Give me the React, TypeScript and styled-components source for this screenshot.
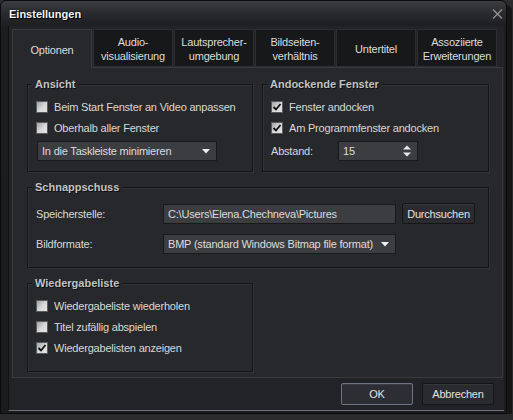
import React from "react";
import styled, { createGlobalStyle } from "styled-components";

const GlobalStyle = createGlobalStyle`
  html, body { margin: 0; padding: 0; background: #2b2b2d; }
  body {
    font-family: "Liberation Sans", Arial, sans-serif;
    font-size: 11px;
    letter-spacing: -0.2px;
    color: #d8d8d8;
  }
  * { box-sizing: border-box; }
`;

const Window = styled.div`
  width: 507px;
  height: 414px;
  display: flex;
  flex-direction: column;
  border: 1px solid #0b0b0c;
  border-radius: 6px 6px 0 0;
  background: linear-gradient(#3c3d40 0, #2a2b2e 12px, #1c1d1f 26px, #1b1c1e 100%);
  box-shadow: 5px 5px 0 #161617;
`;

const TitleBar = styled.div`
  height: 25px;
  flex: none;
  display: flex;
  align-items: center;
  justify-content: space-between;
  padding: 0 2px 0 8px;
`;

const Title = styled.span`
  font-weight: bold;
  letter-spacing: 0;
  color: #f4f4f4;
  text-shadow: 1px 1px 0 #000, 0 0 2px #000;
`;

const CloseButton = styled.button`
  width: 14px;
  height: 14px;
  padding: 0;
  border: none;
  background: none;
  display: flex;
  align-items: center;
  justify-content: center;
`;

const Client = styled.div`
  flex: 1;
  display: flex;
  flex-direction: column;
  margin: 0 2px 2px 7px;
  padding: 3px 1px 0 3px;
  background: #222326;
  border-left: 1px solid #111213;
  border-bottom: 1px solid #6f7079;
`;

const TabRow = styled.div`
  display: flex;
  gap: 1px;
  height: 38px;
  position: relative;
  z-index: 1;
`;

const Tab = styled.div<{ $active?: boolean }>`
  width: 80px;
  height: ${(p) => (p.$active ? "39px" : "38px")};
  display: flex;
  align-items: center;
  justify-content: center;
  padding-top: 2px;
  text-align: center;
  line-height: 14px;
  color: #dcdcdc;
  background: ${(p) => (p.$active ? "#27282b" : "#17181a")};
  border: 1px solid ${(p) => (p.$active ? "#3a3b3f" : "#2d2e31")};
  border-bottom: ${(p) => (p.$active ? "none" : "1px solid #2d2e31")};
`;

const Panel = styled.div`
  height: 311px;
  background: #27282b;
  border: 1px solid #3a3b3f;
  padding: 16px 13px 0 14px;
  display: grid;
  grid-template-columns: 226px 227px;
  grid-auto-rows: min-content;
  column-gap: 9px;
  row-gap: 15px;
`;

const Group = styled.div<{ $h: number; $span?: boolean }>`
  height: ${(p) => p.$h}px;
  grid-column: ${(p) => (p.$span ? "1 / span 2" : "auto")};
  border: 1px solid #141517;
  box-shadow: 1px 1px 0 #333438, inset 1px 1px 0 #333438;
  padding: 0 8px;
  display: flex;
  flex-direction: column;
`;

const GroupTitle = styled.div`
  align-self: flex-start;
  margin: -8px 0 5px -4px;
  padding: 0 3px;
  height: 14px;
  line-height: 14px;
  font-weight: bold;
  letter-spacing: 0;
  color: #c2c2c2;
  background: #27282b;
  text-shadow: 1px 1px 0 #0e0e0f;
`;

const CheckRow = styled.label`
  height: 21px;
  display: flex;
  align-items: center;
  gap: 6px;
`;

const Box = styled.span`
  width: 12px;
  height: 12px;
  flex: none;
  border: 1px solid #5c5c5e;
  background: linear-gradient(135deg, #a2a2a2 0%, #d9d9d9 55%, #e4e4e4 100%);
  display: flex;
  align-items: center;
  justify-content: center;
`;

const Select = styled.div<{ $w: number }>`
  width: ${(p) => p.$w}px;
  height: 20px;
  flex: none;
  display: flex;
  align-items: center;
  justify-content: space-between;
  padding: 0 6px 0 4px;
  background: #3c3d41;
  border: 1px solid #18191b;
  color: #dcdcdc;
`;

const TextInput = styled.div<{ $w: number }>`
  width: ${(p) => p.$w}px;
  height: 20px;
  flex: none;
  display: flex;
  align-items: center;
  padding: 0 4px;
  background: #3c3d41;
  border: 1px solid #18191b;
  color: #dcdcdc;
`;

const FieldRow = styled.div<{ $top?: number }>`
  display: flex;
  align-items: center;
  margin-top: ${(p) => p.$top ?? 0}px;
`;

const FieldLabel = styled.span<{ $w: number }>`
  width: ${(p) => p.$w}px;
  flex: none;
`;

const Button = styled.button<{ $w: number; $h?: number; $focus?: boolean }>`
  width: ${(p) => p.$w}px;
  height: ${(p) => p.$h ?? 22}px;
  flex: none;
  padding: 0;
  font: inherit;
  letter-spacing: inherit;
  color: #e2e2e2;
  background: ${(p) => (p.$focus ? "#2c2e34" : "#2a2b2e")};
  border: 1px solid ${(p) => (p.$focus ? "#6f7586" : "#141517")};
  box-shadow: inset 0 1px 0 ${(p) => (p.$focus ? "#3a3d45" : "#36373b")};
  border-radius: 2px;
`;

const Footer = styled.div`
  flex: 1;
  display: flex;
  justify-content: flex-end;
  align-items: flex-start;
  gap: 9px;
  padding: 5px 9px 0 0;
`;

const DownArrow = () => (
  <svg width="8" height="5" viewBox="0 0 8 5">
    <path d="M0 0h8L4 4.5z" fill="#f0f0f0" />
  </svg>
);

const SpinArrows = () => (
  <svg width="8" height="12" viewBox="0 0 8 12">
    <path d="M0 4.5h8L4 0.5z" fill="#e8e8e8" />
    <path d="M0 7.5h8L4 11.5z" fill="#e8e8e8" />
  </svg>
);

const Check = ({ checked, children }: { checked?: boolean; children: React.ReactNode }) => (
  <CheckRow>
    <Box>
      {checked && (
        <svg width="10" height="10" viewBox="0 0 10 10">
          <path d="M1.5 5 L4 7.5 L8.5 2" stroke="#111" strokeWidth="1.8" fill="none" />
        </svg>
      )}
    </Box>
    <span>{children}</span>
  </CheckRow>
);

const tabs = [
  ["Optionen"],
  ["Audio-", "visualisierung"],
  ["Lautsprecher-", "umgebung"],
  ["Bildseiten-", "verhältnis"],
  ["Untertitel"],
  ["Assoziierte", "Erweiterungen"],
];

export default function App() {
  return (
    <>
      <GlobalStyle />
      <Window>
        <TitleBar>
          <Title>Einstellungen</Title>
          <CloseButton>
            <svg width="11" height="10" viewBox="0 0 11 10">
              <path d="M1 0.5 L10 9.5 M10 0.5 L1 9.5" stroke="#929294" strokeWidth="1.3" />
            </svg>
          </CloseButton>
        </TitleBar>
        <Client>
          <TabRow>
            {tabs.map((t, i) => (
              <Tab key={i} $active={i === 0}>
                <div>
                  {t.map((line) => (
                    <div key={line}>{line}</div>
                  ))}
                </div>
              </Tab>
            ))}
          </TabRow>
          <Panel>
            <Group $h={88}>
              <GroupTitle>Ansicht</GroupTitle>
              <Check>Beim Start Fenster an Video anpassen</Check>
              <Check>Oberhalb aller Fenster</Check>
              <FieldRow $top={3}>
                <Select $w={180} style={{ marginLeft: 1 }}>
                  <span>In die Taskleiste minimieren</span>
                  <DownArrow />
                </Select>
              </FieldRow>
            </Group>
            <Group $h={88}>
              <GroupTitle>Andockende Fenster</GroupTitle>
              <Check checked>Fenster andocken</Check>
              <Check checked>Am Programmfenster andocken</Check>
              <FieldRow $top={3}>
                <FieldLabel $w={67}>Abstand:</FieldLabel>
                <Select $w={80}>
                  <span>15</span>
                  <SpinArrows />
                </Select>
              </FieldRow>
            </Group>
            <Group $h={81} $span>
              <GroupTitle>Schnappschuss</GroupTitle>
              <FieldRow $top={4}>
                <FieldLabel $w={127}>Speicherstelle:</FieldLabel>
                <TextInput $w={233}>C:\Users\Elena.Chechneva\Pictures</TextInput>
                <Button $w={73} $h={21} style={{ marginLeft: 6 }}>
                  Durchsuchen
                </Button>
              </FieldRow>
              <FieldRow $top={10}>
                <FieldLabel $w={127}>Bildformate:</FieldLabel>
                <Select $w={233}>
                  <span>BMP (standard Windows Bitmap file format)</span>
                  <DownArrow />
                </Select>
              </FieldRow>
            </Group>
            <Group $h={89}>
              <GroupTitle>Wiedergabeliste</GroupTitle>
              <Check>Wiedergabeliste wiederholen</Check>
              <Check>Titel zufällig abspielen</Check>
              <Check checked>Wiedergabelisten anzeigen</Check>
            </Group>
          </Panel>
          <Footer>
            <Button $w={72} $focus>
              OK
            </Button>
            <Button $w={72}>Abbrechen</Button>
          </Footer>
        </Client>
      </Window>
    </>
  );
}
